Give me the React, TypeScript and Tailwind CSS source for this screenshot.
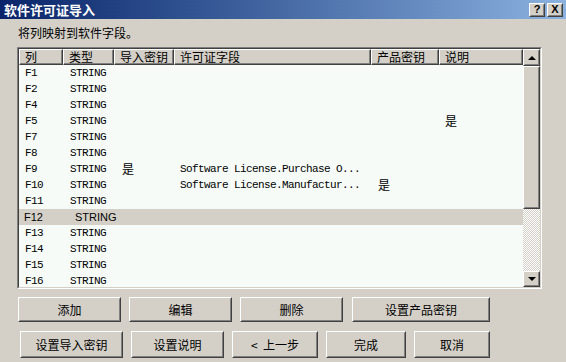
const cjk = "font-['Noto_Sans_CJK_SC','Liberation_Sans',sans-serif]"
const mono = "font-['Liberation_Mono','Noto_Sans_CJK_SC',monospace]"

type Row = {
  col: string
  type: string
  importKey?: string
  field?: string
  productKey?: string
  desc?: string
  selected?: boolean
}

const rows: Row[] = [
  { col: 'F1', type: 'STRING' },
  { col: 'F2', type: 'STRING' },
  { col: 'F4', type: 'STRING' },
  { col: 'F5', type: 'STRING', desc: '是' },
  { col: 'F7', type: 'STRING' },
  { col: 'F8', type: 'STRING' },
  { col: 'F9', type: 'STRING', importKey: '是', field: 'Software License.Purchase O...' },
  { col: 'F10', type: 'STRING', field: 'Software License.Manufactur...', productKey: '是' },
  { col: 'F11', type: 'STRING' },
  { col: 'F12', type: 'STRING', selected: true },
  { col: 'F13', type: 'STRING' },
  { col: 'F14', type: 'STRING' },
  { col: 'F15', type: 'STRING' },
  { col: 'F16', type: 'STRING' },
]

const headers = [
  { label: '列', w: 'w-[44px]' },
  { label: '类型', w: 'w-[51px]' },
  { label: '导入密钥', w: 'w-[60px]' },
  { label: '许可证字段', w: 'w-[197px]' },
  { label: '产品密钥', w: 'w-[68px]' },
  { label: '说明', w: 'w-[84px]' },
]

function Raised({ className = '', children }: { className?: string; children?: React.ReactNode }) {
  return (
    <div className={`border border-t-white border-l-white border-b-[#404040] border-r-[#404040] ${className}`}>
      <div className="w-full h-full border border-t-[#d4d0c8] border-l-[#d4d0c8] border-b-[#808080] border-r-[#808080] flex items-center justify-center">
        {children}
      </div>
    </div>
  )
}

function Btn({ label, w, h }: { label: string; w: string; h: string }) {
  return (
    <Raised className={`${w} ${h} bg-[#d4d0c8]`}>
      <span className={`${cjk} text-[12px] leading-none text-black whitespace-pre`}>{label}</span>
    </Raised>
  )
}

function HeaderCell({ label, w }: { label: string; w: string }) {
  return (
    <div className={`${w} h-[16px] shrink-0 border border-t-white border-l-white border-b-[#404040] border-r-[#404040] bg-[#d4d0c8]`}>
      <div className="h-full border-b border-r border-b-[#808080] border-r-[#808080] pl-[5px] flex items-center">
        <span className={`${cjk} text-[12px] leading-none text-black`}>{label}</span>
      </div>
    </div>
  )
}

function ListRow({ r }: { r: Row }) {
  if (r.selected) {
    return (
      <div className="h-[16px] flex items-center bg-[#d4d0c8] font-['Liberation_Sans',sans-serif] text-[11px] text-black">
        <span className="w-[56px] pl-[5px]">{r.col}</span>
        <span>{r.type}</span>
      </div>
    )
  }
  return (
    <div className={`h-[16px] flex items-center ${mono} text-[11px] tracking-[-0.6px] text-black`}>
      <span className="w-[44px] pl-[6px]">{r.col}</span>
      <span className="w-[51px] pl-[7px]">{r.type}</span>
      <span className={`w-[60px] pl-[8px] ${cjk} text-[12px] tracking-normal`}>{r.importKey}</span>
      <span className="w-[197px] pl-[6px] whitespace-nowrap">{r.field}</span>
      <span className={`w-[68px] pl-[7px] ${cjk} text-[12px] tracking-normal`}>{r.productKey}</span>
      <span className={`w-[84px] pl-[6px] ${cjk} text-[12px] tracking-normal`}>{r.desc}</span>
    </div>
  )
}

function ScrollBar() {
  return (
    <div className="w-[17px] flex flex-col">
      <Raised className="h-[17px] bg-[#d4d0c8]">
        <div className="w-0 h-0 border-l-[4px] border-r-[4px] border-b-[4px] border-l-transparent border-r-transparent border-b-black" />
      </Raised>
      <Raised className="h-[143px] bg-[#d4d0c8]" />
      <div className="flex-1 bg-[repeating-conic-gradient(#d4d0c8_0_25%,#ffffff_0_50%)] bg-[length:2px_2px]" />
      <Raised className="h-[16px] bg-[#d4d0c8]">
        <div className="w-0 h-0 border-l-[4px] border-r-[4px] border-t-[4px] border-l-transparent border-r-transparent border-t-black" />
      </Raised>
    </div>
  )
}

export default function App() {
  return (
    <div className="w-[566px] h-[362px] bg-[#d4d0c8] overflow-hidden flex flex-col">
      {/* title bar */}
      <div className="h-[19px] shrink-0 bg-linear-to-r from-[#0a246a] to-[#8cb2e0] flex items-center pl-[4px] pr-[3px]">
        <span className={`${cjk} text-[13px] font-bold leading-none text-white`}>软件许可证导入</span>
        <div className="ml-auto flex gap-[2px]">
          <Raised className="w-[16px] h-[14px] bg-[#d4d0c8]">
            <span className="font-['Liberation_Sans',sans-serif] text-[11px] font-bold leading-none">?</span>
          </Raised>
          <Raised className="w-[16px] h-[14px] bg-[#d4d0c8]">
            <span className="font-['Liberation_Sans',sans-serif] text-[11px] font-bold leading-none">X</span>
          </Raised>
        </div>
      </div>

      <div className={`${cjk} text-[12px] leading-[12px] text-black pl-[18px] pt-[8px]`}>将列映射到软件字段。</div>

      {/* list */}
      <div className="ml-[17px] mt-[8px] w-[525px] h-[242px] border border-t-[#808080] border-l-[#808080] border-b-white border-r-white">
        <div className="w-full h-full border border-t-[#404040] border-l-[#404040] border-b-[#d4d0c8] border-r-[#d4d0c8] flex bg-[#f6fbf7]">
          <div className="w-[504px] flex flex-col overflow-hidden">
            <div className="flex shrink-0">
              {headers.map((h) => (
                <HeaderCell key={h.label} label={h.label} w={h.w} />
              ))}
            </div>
            <div className="overflow-hidden">
              {rows.map((r) => (
                <ListRow key={r.col} r={r} />
              ))}
            </div>
          </div>
          <ScrollBar />
        </div>
      </div>

      {/* buttons */}
      <div className="flex mt-[8px] pl-[18px] gap-[8px]">
        <Btn label="添加" w="w-[103px]" h="h-[25px]" />
        <Btn label="编辑" w="w-[103px]" h="h-[25px]" />
        <Btn label="删除" w="w-[103px]" h="h-[25px]" />
        <Btn label="设置产品密钥" w="w-[138px] ml-[1px]" h="h-[25px]" />
      </div>
      <div className="flex mt-[9px] pl-[20px] gap-[8px]">
        <Btn label="设置导入密钥" w="w-[103px]" h="h-[27px]" />
        <Btn label="设置说明" w="w-[93px]" h="h-[27px]" />
        <Btn label="<  上一步" w="w-[86px]" h="h-[27px]" />
        <Btn label="完成" w="w-[80px]" h="h-[27px]" />
        <Btn label="取消" w="w-[76px]" h="h-[27px]" />
      </div>
    </div>
  )
}
